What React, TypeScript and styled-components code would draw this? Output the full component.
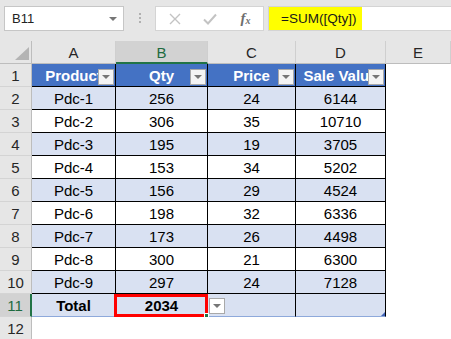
import React from 'react'
import styled, { createGlobalStyle } from 'styled-components'

const GlobalStyle = createGlobalStyle`
  html, body {
    margin: 0;
    padding: 0;
    background: #ffffff;
  }
  body {
    font-family: "Liberation Sans", Arial, sans-serif;
  }
  * {
    box-sizing: border-box;
  }
`

type Row = { product: string; qty: number; price: number; value: number }

const rows: Row[] = [
  { product: 'Pdc-1', qty: 256, price: 24, value: 6144 },
  { product: 'Pdc-2', qty: 306, price: 35, value: 10710 },
  { product: 'Pdc-3', qty: 195, price: 19, value: 3705 },
  { product: 'Pdc-4', qty: 153, price: 34, value: 5202 },
  { product: 'Pdc-5', qty: 156, price: 29, value: 4524 },
  { product: 'Pdc-6', qty: 198, price: 32, value: 6336 },
  { product: 'Pdc-7', qty: 173, price: 26, value: 4498 },
  { product: 'Pdc-8', qty: 300, price: 21, value: 6300 },
  { product: 'Pdc-9', qty: 297, price: 24, value: 7128 },
]

const headers = ['Product', 'Qty', 'Price', 'Sale Value']
const columns = ['A', 'B', 'C', 'D', 'E']

const FilterButton = () => (
  <Filter>
    <Caret />
  </Filter>
)

const App = () => {
  const total = rows.reduce((sum, r) => sum + r.qty, 0)

  return (
    <Window>
      <GlobalStyle />
      <Toolbar>
        <NameBox>
          B11
          <Caret />
        </NameBox>
        <Grip>
          <i />
          <i />
          <i />
        </Grip>
        <FxBox>
          <svg width="12" height="12" viewBox="0 0 12 12">
            <path d="M1 1 L11 11 M11 1 L1 11" stroke="#c3c3c3" strokeWidth="1.4" fill="none" />
          </svg>
          <svg width="14" height="12" viewBox="0 0 14 12">
            <path d="M1 6.5 L5 10.5 L13 1.5" stroke="#c3c3c3" strokeWidth="2" fill="none" />
          </svg>
          <FxLabel>
            f<sub>x</sub>
          </FxLabel>
        </FxBox>
        <Formula>
          <Highlight>=SUM([Qty])</Highlight>
        </Formula>
      </Toolbar>

      <Sheet>
        <Corner />
        {columns.map((c) => (
          <ColHeader key={c} $selected={c === 'B'}>
            {c}
          </ColHeader>
        ))}

        <RowHeader>1</RowHeader>
        {headers.map((h) => (
          <HeadCell key={h}>
            <span>{h}</span>
            <FilterButton />
          </HeadCell>
        ))}
        <Blank />

        {rows.map((r, i) => {
          const band = i % 2 === 0
          return (
            <React.Fragment key={r.product}>
              <RowHeader>{i + 2}</RowHeader>
              <DataCell $band={band}>{r.product}</DataCell>
              <DataCell $band={band}>{r.qty}</DataCell>
              <DataCell $band={band}>{r.price}</DataCell>
              <DataCell $band={band}>{r.value}</DataCell>
              <Blank />
            </React.Fragment>
          )
        })}

        <RowHeader $selected>11</RowHeader>
        <DataCell $band $total $bold>
          Total
        </DataCell>
        <DataCell $band $total $bold>
          {total}
          <ActiveCell>
            <FillHandle />
          </ActiveCell>
        </DataCell>
        <DataCell $band $total>
          <CellDrop>
            <Caret />
          </CellDrop>
        </DataCell>
        <DataCell $band $total>
          <ResizeGrip />
        </DataCell>
        <Blank />

        <RowHeader>12</RowHeader>
        <Blank />
        <Blank />
        <Blank />
        <Blank />
        <Blank />
      </Sheet>
    </Window>
  )
}

const Window = styled.div`
  width: 451px;
  height: 339px;
  overflow: hidden;
  background: #ffffff;
  display: flex;
  flex-direction: column;
`

const Toolbar = styled.div`
  height: 41px;
  flex: none;
  background: #e6e6e6;
  display: flex;
  align-items: flex-start;
  padding: 6px 0 0 4px;
`

const Caret = styled.span`
  width: 0;
  height: 0;
  border-left: 4px solid transparent;
  border-right: 4px solid transparent;
  border-top: 4px solid #767676;
`

const NameBox = styled.div`
  width: 120px;
  height: 25px;
  background: #ffffff;
  border: 1px solid #c6c6c6;
  display: flex;
  align-items: center;
  justify-content: space-between;
  padding: 0 6px 0 7px;
  font-size: 13px;
  color: #222222;
`

const Grip = styled.div`
  display: flex;
  flex-direction: column;
  gap: 2px;
  margin: 7px 14px 0 15px;

  i {
    display: block;
    width: 2px;
    height: 2px;
    background: #b0b0b0;
  }
`

const FxBox = styled.div`
  width: 109px;
  height: 25px;
  background: #ffffff;
  border: 1px solid #d4d4d4;
  display: grid;
  grid-template-columns: 37px 34px 37px;
  align-items: center;
  justify-items: center;
`

const FxLabel = styled.span`
  font-family: "Liberation Serif", "Times New Roman", serif;
  font-style: italic;
  font-weight: bold;
  font-size: 15px;
  color: #6e6e6e;
  line-height: 1;

  sub {
    font-size: 10px;
    vertical-align: -1px;
  }
`

const Formula = styled.div`
  flex: 1;
  height: 25px;
  margin-left: 4px;
  margin-right: -3px;
  background: #ffffff;
  border: 1px solid #d4d4d4;
  display: flex;
`

const Highlight = styled.div`
  background: #ffff00;
  display: flex;
  align-items: center;
  padding: 0 6px 0 12px;
  font-size: 13.5px;
  color: #1a1a1a;
`

const Sheet = styled.div`
  display: grid;
  grid-template-columns: 32px 84px 92px 88px 90px 1fr;
  grid-auto-rows: 23px;
  font-size: 15px;
  color: #000000;
`

const Corner = styled.div`
  position: relative;
  background: #e6e6e6;
  border-right: 1px solid #bdbdbd;
  border-bottom: 1px solid #bdbdbd;

  &::after {
    content: '';
    position: absolute;
    right: 2px;
    bottom: 3px;
    border-left: 14px solid transparent;
    border-bottom: 13px solid #b4b4b4;
  }
`

const ColHeader = styled.div<{ $selected?: boolean }>`
  background: ${(p) => (p.$selected ? '#d2d2d2' : '#e6e6e6')};
  color: ${(p) => (p.$selected ? '#1e6b40' : '#262626')};
  border-right: 1px solid #cfcfcf;
  border-bottom: ${(p) => (p.$selected ? '2px solid #217346' : '1px solid #bdbdbd')};
  display: flex;
  align-items: center;
  justify-content: center;
  padding-top: ${(p) => (p.$selected ? '1px' : '0')};
`

const RowHeader = styled.div<{ $selected?: boolean }>`
  background: ${(p) => (p.$selected ? '#d2d2d2' : '#e6e6e6')};
  color: ${(p) => (p.$selected ? '#1e6b40' : '#262626')};
  border-right: ${(p) => (p.$selected ? '2px solid #217346' : '1px solid #bdbdbd')};
  border-bottom: 1px solid #d4d4d4;
  display: flex;
  align-items: center;
  justify-content: center;
`

const HeadCell = styled.div`
  position: relative;
  overflow: hidden;
  background: #4472c4;
  color: #ffffff;
  font-weight: bold;
  border-right: 1px solid #000000;
  border-bottom: 1px solid #000000;
  display: flex;
  align-items: center;
  justify-content: center;
  white-space: nowrap;
`

const Filter = styled.div`
  position: absolute;
  right: 1px;
  bottom: 1px;
  width: 16px;
  height: 16px;
  background: #f4f4f4;
  border: 1px solid #a9a9a9;
  display: flex;
  align-items: center;
  justify-content: center;
`

const DataCell = styled.div<{ $band?: boolean; $total?: boolean; $bold?: boolean }>`
  position: relative;
  background: ${(p) => (p.$band ? '#d9e1f2' : '#ffffff')};
  font-weight: ${(p) => (p.$bold ? 'bold' : 'normal')};
  border-right: 1px solid #000000;
  border-bottom: 1px solid ${(p) => (p.$total ? '#8ea9db' : '#000000')};
  display: flex;
  align-items: center;
  justify-content: center;
  white-space: nowrap;
`

const Blank = styled.div`
  background: #ffffff;
`

const ActiveCell = styled.div`
  position: absolute;
  left: -2px;
  top: 0;
  right: -1px;
  bottom: -1px;
  border: 3px solid #ff0000;
  z-index: 2;
`

const FillHandle = styled.div`
  position: absolute;
  right: -4px;
  bottom: -4px;
  width: 5px;
  height: 5px;
  background: #217346;
  border: 1px solid #ffffff;
`

const CellDrop = styled.div`
  position: absolute;
  left: 1px;
  top: 4px;
  width: 16px;
  height: 16px;
  background: #ffffff;
  border: 1px solid #a9a9a9;
  display: flex;
  align-items: center;
  justify-content: center;
`

const ResizeGrip = styled.div`
  position: absolute;
  right: 0;
  bottom: 0;
  border-left: 4px solid transparent;
  border-bottom: 4px solid #3f62b5;
`

export default App
